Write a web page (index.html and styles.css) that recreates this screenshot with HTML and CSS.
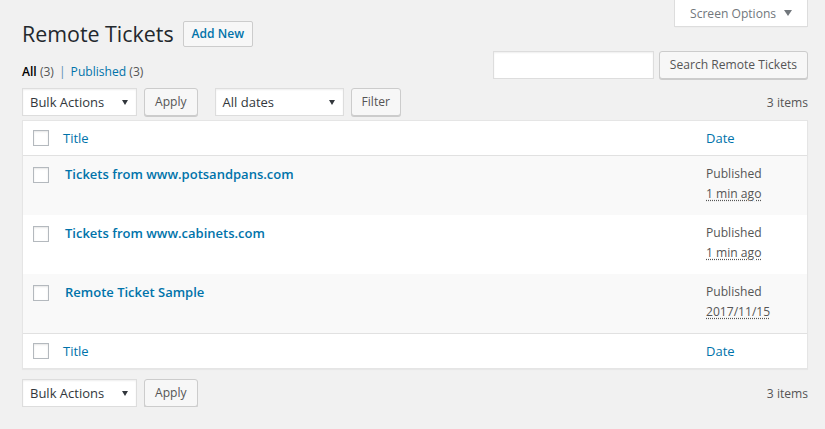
FILE: index.html
```html
<!DOCTYPE html>
<html lang="en">
<head>
<meta charset="utf-8">
<title>Remote Tickets</title>
<link rel="stylesheet" href="styles.css">
</head>
<body>
<div class="wrap">
  <div class="top-bar">
    <div class="title-row">
      <h1>Remote Tickets</h1>
      <a class="page-title-action" href="#">Add New</a>
    </div>
    <button class="screen-options" type="button">Screen Options
      <svg class="caret" width="8" height="6" viewBox="0 0 8 6"><path d="M0 0h8L4 6z" fill="#72777c"/></svg>
    </button>
  </div>

  <div class="filter-row">
    <ul class="subsubsub">
      <li class="current">All <span class="count">(3)</span></li>
      <li class="sep">|</li>
      <li><a href="#">Published <span class="count">(3)</span></a></li>
    </ul>
    <div class="search-box">
      <input class="search-input" type="search" aria-label="Search">
      <button class="button" type="button">Search Remote Tickets</button>
    </div>
  </div>

  <div class="tablenav">
    <div class="actions">
      <div class="select select-bulk"><span>Bulk Actions</span><svg width="6" height="5" viewBox="0 0 6 5"><path d="M0 0h6L3 5z" fill="#32373c"/></svg></div>
      <button class="button" type="button">Apply</button>
    </div>
    <div class="actions">
      <div class="select select-dates"><span>All dates</span><svg width="6" height="5" viewBox="0 0 6 5"><path d="M0 0h6L3 5z" fill="#32373c"/></svg></div>
      <button class="button" type="button">Filter</button>
    </div>
    <span class="displaying-num">3 items</span>
  </div>

  <table class="list-table">
    <thead>
      <tr>
        <th class="check-col"><span class="checkbox"></span></th>
        <th class="title-col"><a href="#">Title</a></th>
        <th class="date-col"><a href="#">Date</a></th>
      </tr>
    </thead>
    <tbody>
      <tr class="alt">
        <th class="check-col"><span class="checkbox"></span></th>
        <td class="title-cell"><a href="#">Tickets from www.potsandpans.com</a></td>
        <td class="date-cell">Published<br><abbr>1 min ago</abbr></td>
      </tr>
      <tr>
        <th class="check-col"><span class="checkbox"></span></th>
        <td class="title-cell"><a href="#">Tickets from www.cabinets.com</a></td>
        <td class="date-cell">Published<br><abbr>1 min ago</abbr></td>
      </tr>
      <tr class="alt">
        <th class="check-col"><span class="checkbox"></span></th>
        <td class="title-cell"><a href="#">Remote Ticket Sample</a></td>
        <td class="date-cell">Published<br><abbr>2017/11/15</abbr></td>
      </tr>
    </tbody>
    <tfoot>
      <tr>
        <th class="check-col"><span class="checkbox"></span></th>
        <th class="title-col"><a href="#">Title</a></th>
        <th class="date-col"><a href="#">Date</a></th>
      </tr>
    </tfoot>
  </table>

  <div class="tablenav bottom">
    <div class="actions">
      <div class="select select-bulk"><span>Bulk Actions</span><svg width="6" height="5" viewBox="0 0 6 5"><path d="M0 0h6L3 5z" fill="#32373c"/></svg></div>
      <button class="button" type="button">Apply</button>
    </div>
    <span class="displaying-num">3 items</span>
  </div>
</div>
</body>
</html>
```

FILE: styles.css
```css
* { box-sizing: border-box; }

body {
  margin: 0;
  background: #f1f1f1;
  font-family: "Open Sans", "Noto Sans", sans-serif;
  font-size: 12.1px;
  color: #444;
}

a { color: #0073aa; text-decoration: none; }

.wrap { margin: 0 17px 0 22px; }

.top-bar {
  display: flex;
  justify-content: space-between;
  align-items: flex-start;
}

.title-row {
  display: flex;
  align-items: center;
  gap: 9px;
  padding-top: 19px;
}

h1 {
  margin: 0;
  font-size: 21.4px;
  font-weight: 400;
  line-height: 29px;
  color: #23282d;
}

.page-title-action {
  display: inline-block;
  height: 26px;
  padding: 0 8px;
  line-height: 24px;
  font-size: 12.1px;
  font-weight: 600;
  color: #0073aa;
  background: #f7f7f7;
  border: 1px solid #ccc;
  border-radius: 2px;
}

.screen-options {
  display: flex;
  align-items: center;
  gap: 8px;
  width: 134px;
  height: 27px;
  padding: 0 0 0 15px;
  background: #fff;
  border: 1px solid #ddd;
  border-top: 0;
  box-shadow: 0 1px 1px -1px rgba(0, 0, 0, .1);
  color: #72777c;
  font: inherit;
  font-size: 12.1px;
}

.filter-row {
  display: flex;
  justify-content: space-between;
  align-items: flex-start;
  height: 28px;
  margin-top: 3px;
}

.subsubsub {
  display: flex;
  gap: 5px;
  list-style: none;
  margin: 8px 0 0;
  padding: 0;
  line-height: 26px;
  color: #666;
}

.subsubsub .current { color: #000; font-weight: 600; }
.subsubsub .count { color: #555; font-weight: 400; }
.subsubsub .sep { color: #5b8fb0; }

.search-box { display: flex; gap: 5px; }

.search-input {
  width: 161px;
  height: 28px;
  margin: 0;
  border: 1px solid #ddd;
  background: #fff;
  box-shadow: inset 0 1px 2px rgba(0, 0, 0, .07);
}

.button {
  height: 28px;
  margin: 0;
  padding: 0 10px 1px;
  border: 1px solid #ccc;
  border-radius: 3px;
  background: #f7f7f7;
  box-shadow: 0 1px 0 #ccc;
  color: #555;
  font: inherit;
  font-size: 12.1px;
  line-height: 26px;
}

.tablenav {
  display: flex;
  align-items: center;
  height: 28px;
  margin-top: 9px;
}

.tablenav.bottom { margin-top: 10px; }

.actions {
  display: flex;
  gap: 7px;
  margin-right: 17px;
}

.select {
  display: flex;
  align-items: center;
  justify-content: space-between;
  height: 28px;
  padding: 0 8px 0 7px;
  background: #fff;
  border: 1px solid #ddd;
  box-shadow: inset 0 1px 2px rgba(0, 0, 0, .07);
  color: #32373c;
  font-size: 13px;
}

.select-bulk { width: 115px; }
.select-dates { width: 129px; }

.displaying-num { margin-left: auto; color: #555; }

.list-table {
  width: 100%;
  margin-top: 4px;
  border-spacing: 0;
  border: 1px solid #e5e5e5;
  background: #fff;
  box-shadow: 0 1px 1px rgba(0, 0, 0, .04);
}

.list-table th,
.list-table td {
  text-align: left;
  vertical-align: top;
  font-weight: 400;
}

.list-table thead th { border-bottom: 1px solid #e1e1e1; }
.list-table tfoot th { border-top: 1px solid #e1e1e1; }

.title-col,
.date-col {
  padding: 8px 10px 7px;
  font-size: 13px;
  line-height: 19px;
}

.date-col { width: 111px; }

.check-col {
  width: 30px;
  padding: 9px 0 0 10px;
}

tbody .check-col { padding-top: 11px; }

.checkbox {
  display: block;
  width: 16px;
  height: 16px;
  background: #fff;
  border: 1px solid #b4b9be;
  box-shadow: inset 0 1px 2px rgba(0, 0, 0, .1);
}

tbody tr.alt { background: #f9f9f9; }

.title-cell {
  padding: 8px 10px 12px 12px;
  font-size: 13px;
  line-height: 21px;
}

.title-cell a { font-weight: 600; }

.date-cell {
  padding: 8px 10px 12px;
  line-height: 19.5px;
  color: #555;
}

.date-cell abbr {
  text-decoration: underline dotted;
  text-underline-offset: 2px;
}
```
